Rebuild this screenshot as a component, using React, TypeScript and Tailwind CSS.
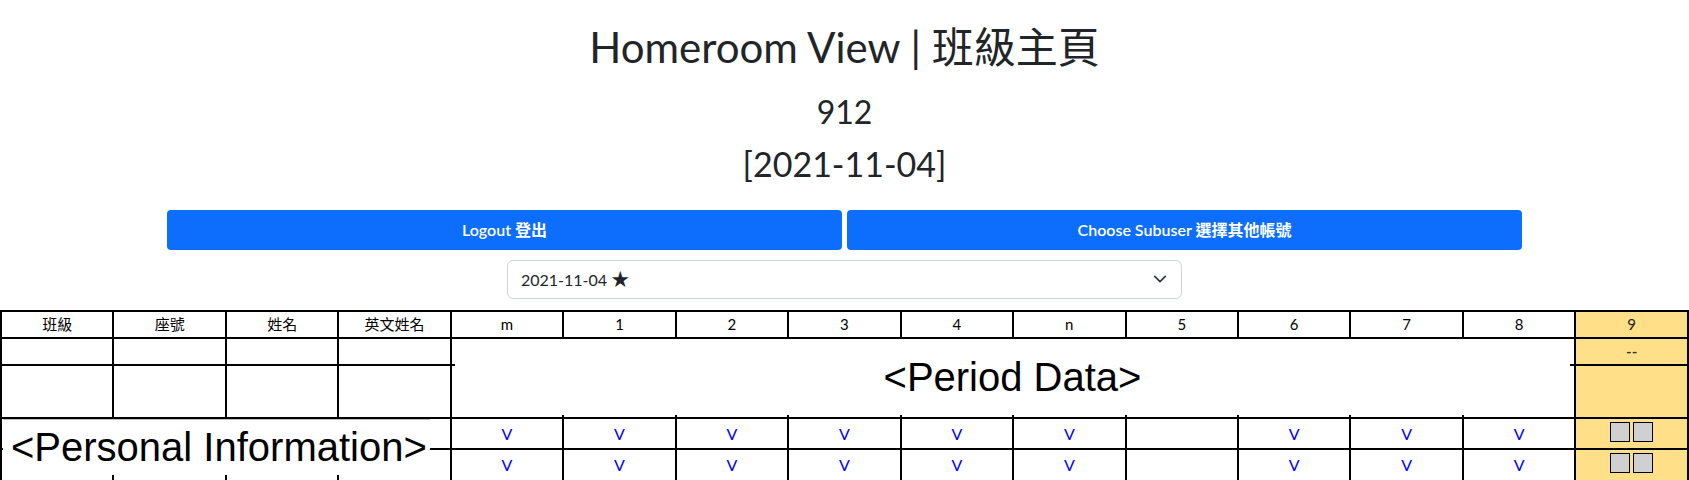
import React from "react";

const heads = ["班級", "座號", "姓名", "英文姓名", "m", "1", "2", "3", "4", "n", "5", "6", "7", "8", "9"];
// which period columns (m..8) show a check mark in the attendance rows
const marks = [true, true, true, true, true, true, false, true, true, true];

function Squares() {
  return (
    <div className="flex justify-center gap-[3px]">
      <span className="w-5 h-5 bg-[#d0d0d0] border border-black" />
      <span className="w-5 h-5 bg-[#d0d0d0] border border-black" />
    </div>
  );
}

function MarkRow({ h }: { h: string }) {
  return (
    <tr>
      {[0, 1, 2, 3].map((i) => (
        <td key={i} className={`border-2 border-black ${h}`} />
      ))}
      {marks.map((m, i) => (
        <td key={i} className={`border-2 border-black text-center align-top pt-[3px] text-[16px] text-[#0000ff] ${h}`}>
          {m ? "V" : ""}
        </td>
      ))}
      <td className={`border-2 border-black bg-[#ffdf88] align-top pt-[3px] ${h}`}>
        <Squares />
      </td>
    </tr>
  );
}

export default function App() {
  return (
    <div className="w-[1689px] h-[480px] overflow-hidden bg-white text-[#212529] font-['Lato','Noto_Sans_CJK_TC',sans-serif]">
      <div className="flex flex-col items-center pt-[22px]">
        <h1 className="text-[42px] leading-[1.2] font-normal">Homeroom View | 班級主頁</h1>
        <h2 className="mt-[21px] text-[32px] leading-[1.2]">912</h2>
        <h2 className="mt-[12px] text-[34px] leading-[1.2]">[2021-11-04]</h2>
      </div>

      <div className="mt-[25px] w-[1355px] mx-auto flex gap-[5px]">
        <button className="flex-1 h-10 rounded bg-[#0d6efd] text-white text-[16px] font-semibold">
          Logout 登出
        </button>
        <button className="flex-1 h-10 rounded bg-[#0d6efd] text-white text-[16px] font-semibold">
          Choose Subuser 選擇其他帳號
        </button>
      </div>

      <div className="mt-[10px] w-[675px] h-[39px] mx-auto border border-[#ced4da] rounded-md pl-[13px] pr-[14px] flex items-center justify-between text-[16px]">
        <span>
          2021-11-04 <span className="text-[18px]">★</span>
        </span>
        <svg width="14" height="14" viewBox="0 0 16 16" fill="none" stroke="#343a40" strokeWidth="2" strokeLinecap="round" strokeLinejoin="round">
          <path d="M2 5l6 6 6-6" />
        </svg>
      </div>

      <div className="relative mt-[11px]">
        <table className="w-full table-fixed border-collapse text-[15px] text-black">
          <tbody>
            <tr>
              {heads.map((h, i) => (
                <td key={h} className={`border-2 border-black text-center h-[27px] ${i === 14 ? "bg-[#ffdf88] text-[#212529]" : ""}`}>
                  {h}
                </td>
              ))}
            </tr>
            <tr>
              {heads.map((h, i) => (
                <td key={h} className={`border-2 border-black text-center h-[27px] ${i === 14 ? "bg-[#ffdf88] text-[#333333] font-semibold" : ""}`}>
                  {i === 14 ? "--" : ""}
                </td>
              ))}
            </tr>
            <tr>
              {heads.map((h, i) => (
                <td key={h} className={`border-2 border-black h-[53px] ${i === 14 ? "bg-[#ffdf88]" : ""}`} />
              ))}
            </tr>
            <MarkRow h="h-[31px]" />
            <MarkRow h="h-[44px]" />
          </tbody>
        </table>

        <div className="absolute left-[455px] top-[29px] w-[1115px] h-[76px] bg-white flex items-center justify-center font-['Liberation_Sans',sans-serif] text-[40px] text-black">
          &lt;Period Data&gt;
        </div>
        <div className="absolute left-[3px] top-[109px] w-[427px] h-[56px] bg-white border-t border-[#bbbbbb] flex items-center pl-[8px] font-['Liberation_Sans',sans-serif] text-[40px] text-black">
          &lt;Personal Information&gt;
        </div>
      </div>
    </div>
  );
}
